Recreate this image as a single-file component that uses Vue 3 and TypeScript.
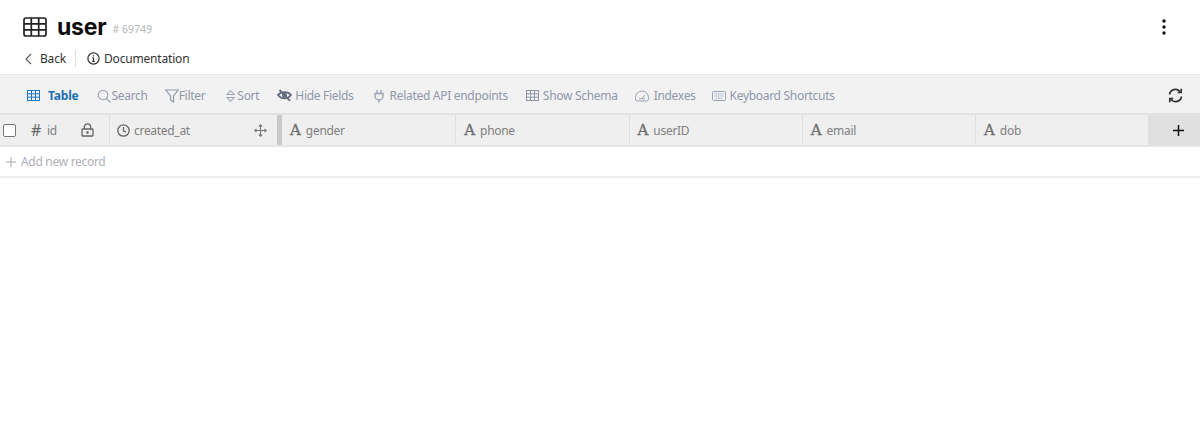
<script setup lang="ts">
const textCols = ['gender', 'phone', 'userID', 'email', 'dob']
</script>

<template>
  <div class="page">
    <header class="head">
      <div class="title-row">
        <svg class="table-ico" width="24" height="20" viewBox="0 0 24 20" fill="none" stroke="#222" stroke-width="1.700">
          <rect x="1" y="1" width="22" height="18" rx="2" />
          <path d="M1 6.800h22M1 12.800h22M8.300 1v18M15.700 1v18" />
        </svg>
        <h1>user</h1>
        <span class="num"># 69749</span>
        <svg class="dots" width="4" height="16" viewBox="0 0 4 16" fill="#111">
          <circle cx="2" cy="2" r="1.700" /><circle cx="2" cy="8" r="1.700" /><circle cx="2" cy="14" r="1.700" />
        </svg>
      </div>
      <div class="links">
        <svg width="9" height="12" viewBox="0 0 9 12" fill="none" stroke="#555" stroke-width="1.100"><path d="M7 1 2 6l5 5" /></svg>
        <span class="back">Back</span>
        <i class="sep"></i>
        <svg class="info" width="13" height="13" viewBox="0 0 13 13" fill="none" stroke="#333" stroke-width="1.200"><circle cx="6.500" cy="6.500" r="5.600" /><path d="M6.500 5.800v3.600M5.400 5.800h1.100M5.200 9.400h2.600M6.500 3.200v1.300" /></svg>
        <span>Documentation</span>
      </div>
    </header>

    <nav class="toolbar">
      <span class="tool active">
        <svg width="13" height="11" viewBox="0 0 13 11" fill="none" stroke="#1b78c4" stroke-width="1"><rect x=".5" y=".5" width="12" height="10" /><path d="M.5 3.800h12M.5 7.200h12M4.500.5v10M8.500.5v10" /></svg>
        Table
      </span>
      <span class="tool s1">
        <svg width="14" height="14" viewBox="0 0 14 14" fill="none" stroke="#9ca3b4" stroke-width="1.100"><circle cx="6" cy="6" r="4.800" /><path d="m9.500 9.500 4 4" /></svg>
        Search
      </span>
      <span class="tool s2">
        <svg width="14" height="14" viewBox="0 0 14 14" fill="none" stroke="#8f97a8" stroke-width="1.200"><path d="M.8 1h12.400L8.500 7v6L5.500 11V7z" /></svg>
        Filter
      </span>
      <span class="tool s3">
        <svg width="9" height="14" viewBox="0 0 9 14" fill="none" stroke="#9ca3b4" stroke-width="1.100"><path d="M1 5.500 4.500 1.500 8 5.500zM1 8.500l3.500 4 3.500-4z" /></svg>
        Sort
      </span>
      <span class="tool s4">
        <svg width="15" height="13" viewBox="0 0 15 13" fill="none" stroke="#656d80" stroke-width="1.800"><path d="M1 6C4 2.200 11 2.200 14 6c-3 4.300-10 4.300-13 0z" /><circle cx="7.500" cy="6.200" r="1.600" /><path d="m2.500 .8 10.500 11" /></svg>
        Hide Fields
      </span>
      <span class="tool s5">
        <svg width="10" height="14" viewBox="0 0 10 14" fill="none" stroke="#9ca3b4" stroke-width="1.400"><path d="M3 1v3.500M7 1v3.500M1 4.500h8v2.500a4 4 0 0 1-8 0zM5 11v2.500" /></svg>
        Related API endpoints
      </span>
      <span class="tool s6">
        <svg width="13" height="11" viewBox="0 0 13 11" fill="none" stroke="#8f97a8" stroke-width="1"><rect x=".5" y=".5" width="12" height="10" /><path d="M.5 3.800h12M.5 7.200h12M4.500.5v10M8.500.5v10" /></svg>
        Show Schema
      </span>
      <span class="tool s7">
        <svg width="14" height="12" viewBox="0 0 14 12" fill="none" stroke="#9ca3b4" stroke-width="1"><path d="M2.500 11h9a2 2 0 0 0 2-2V7.500a6.500 6.500 0 0 0-13 0V9a2 2 0 0 0 2 2z" /><path d="m7 8 3.200-3M4 8.800h6" /></svg>
        Indexes
      </span>
      <span class="tool s8">
        <svg width="14" height="10" viewBox="0 0 14 10" fill="none" stroke="#9ca3b4" stroke-width="1"><rect x=".5" y=".5" width="13" height="9" rx="1" /><path d="M2.500 2.800h9M2.500 5h9M4 7.300h6" stroke-dasharray="1 .7" /></svg>
        Keyboard Shortcuts
      </span>
      <svg class="refresh" width="15" height="15" viewBox="0 0 15 15" fill="none" stroke="#333" stroke-width="1.700">
        <path d="M1.500 6.500A6 6 0 0 1 12 3.500M13.500 8.500A6 6 0 0 1 3 11.500" />
        <path d="M13.200 .8v3.500H9.700M1.800 14.200v-3.500h3.500" />
      </svg>
    </nav>

    <div class="grid-head">
      <div class="cell c-id">
        <span class="check"></span>
        <span class="hash">#</span>
        <span class="name idn">id</span>
        <svg class="lock" width="13" height="14" viewBox="0 0 13 14" fill="none" stroke="#666" stroke-width="1.300"><rect x="1" y="6" width="11" height="7" rx=".8" /><path d="M3.300 6V4a3.200 3.200 0 0 1 6.400 0v2" /><circle cx="6.500" cy="9.500" r=".7" /></svg>
      </div>
      <div class="cell c-created">
        <svg width="13" height="13" viewBox="0 0 13 13" fill="none" stroke="#666" stroke-width="1.300"><circle cx="6.500" cy="6.500" r="5.700" /><path d="M6.500 3v3.800l2.300 1.300" /></svg>
        <span class="name">created_at</span>
        <svg class="move" width="13" height="13" viewBox="0 0 13 13" fill="none" stroke="#777" stroke-width="1.100"><path d="M6.500 .8v11.400M.8 6.500h11.400M4.800 2.500 6.500.8l1.700 1.700M4.800 10.500l1.700 1.700 1.700-1.700M2.500 4.800.8 6.500l1.700 1.700M10.500 4.800l1.700 1.700-1.700 1.700" /></svg>
      </div>
      <div class="freeze"></div>
      <div v-for="c in textCols" :key="c" class="cell text-col">
        <span class="a">A</span>
        <span class="name">{{ c }}</span>
      </div>
      <div class="add-col">
        <svg width="11" height="11" viewBox="0 0 11 11" stroke="#111" stroke-width="1.500"><path d="M5.500 0v11M0 5.500h11" /></svg>
      </div>
    </div>

    <div class="add-row">
      <svg width="10" height="10" viewBox="0 0 10 10" stroke="#aaa" stroke-width="1"><path d="M5 0v10M0 5h10" /></svg>
      <span>Add new record</span>
    </div>
  </div>
</template>

<style scoped>
.page {
  width: 1200px;
  height: 432px;
  background: #fff;
  overflow: hidden;
  font-family: "Noto Sans", "Open Sans", sans-serif;
  font-size: 12px;
  letter-spacing: -0.3px;
}
.head {
  height: 74px;
  box-sizing: border-box;
  padding: 14px 34px 0 23px;
}
.title-row {
  display: flex;
  align-items: center;
  height: 26px;
}
.table-ico { flex: none; }
h1 {
  margin: 0 0 0 10px;
  font: 700 23px/26px Inter, "Liberation Sans", sans-serif;
  letter-spacing: -0.2px;
  color: #0b0b0b;
}
.num {
  margin: 3px 0 0 6px;
  font-size: 10.500px;
  letter-spacing: 0;
  color: #b5b5b5;
}
.dots { margin-left: auto; }
.links {
  display: flex;
  align-items: center;
  height: 17px;
  margin-top: 10px;
  color: #333;
  letter-spacing: -0.18px;
}
.links svg:first-child { margin-left: 1px; }
.back { margin-left: 7px; }
.sep {
  width: 1px;
  height: 17px;
  background: #ddd;
  margin: 0 11px 0 9px;
}
.info { margin-right: 4px; }
.toolbar {
  height: 41px;
  box-sizing: border-box;
  display: flex;
  align-items: center;
  padding: 3px 17px 0 27px;
  background: #f2f2f2;
  border-top: 1px solid #e9e9e9;
  border-bottom: 2px solid #e3e3e3;
  color: #9097a8;
}
.tool {
  display: flex;
  align-items: center;
  white-space: nowrap;
}
.active { color: #1b6fb5; font-weight: 700; gap: 8px; letter-spacing: -0.2px; }
.s1 { margin-left: 19px; }
.s2 { margin-left: 17px; }
.s3 { margin-left: 21px; gap: 2px; }
.s4 { margin-left: 18px; gap: 3px; }
.s5 { margin-left: 20px; gap: 6px; }
.s6 { margin-left: 18px; gap: 4px; }
.s7 { margin-left: 17px; gap: 5px; }
.s8 { margin-left: 16px; gap: 4px; }
.refresh { margin-left: auto; }
.grid-head {
  display: grid;
  grid-template-columns: 109px 168px 5px repeat(4, 173.250px) 173px 1fr;
  height: 32px;
  box-sizing: border-box;
  border-bottom: 2px solid #e6e6e6;
  background: #efefef;
}
.cell {
  display: flex;
  align-items: center;
  box-sizing: border-box;
  color: #808080;
}
.cell + .cell { border-left: 1px solid #e0e0e0; }
.c-id { padding-left: 3px; }
.check {
  width: 11px;
  height: 11px;
  border: 1px solid #767676;
  border-radius: 2px;
  background: #fff;
}
.hash {
  margin-left: 15px;
  font-size: 16px;
  color: #666;
}
.c-id .idn { margin-left: 6px; }
.lock { margin-left: auto; margin-right: 15px; }
.c-created { padding-left: 7px; }
.c-created .name { margin-left: 4px; }
.move { margin-left: auto; margin-right: 10px; }
.freeze { background: #c9c9c9; }
.text-col { padding-left: 8px; }
.a {
  font: 400 15px "DejaVu Serif", serif;
  letter-spacing: 0;
  color: #707070;
  -webkit-text-stroke: 0.35px #707070;
  margin-right: 5px;
}
.add-col {
  background: #e0e0e0;
  display: flex;
  align-items: center;
  justify-content: center;
  padding-left: 8px;
  box-sizing: border-box;
}
.add-row {
  height: 31px;
  box-sizing: border-box;
  display: flex;
  align-items: center;
  gap: 5px;
  padding-left: 6px;
  color: #aeb0b8;
  border-bottom: 2px solid #eeeeee;
}
</style>
